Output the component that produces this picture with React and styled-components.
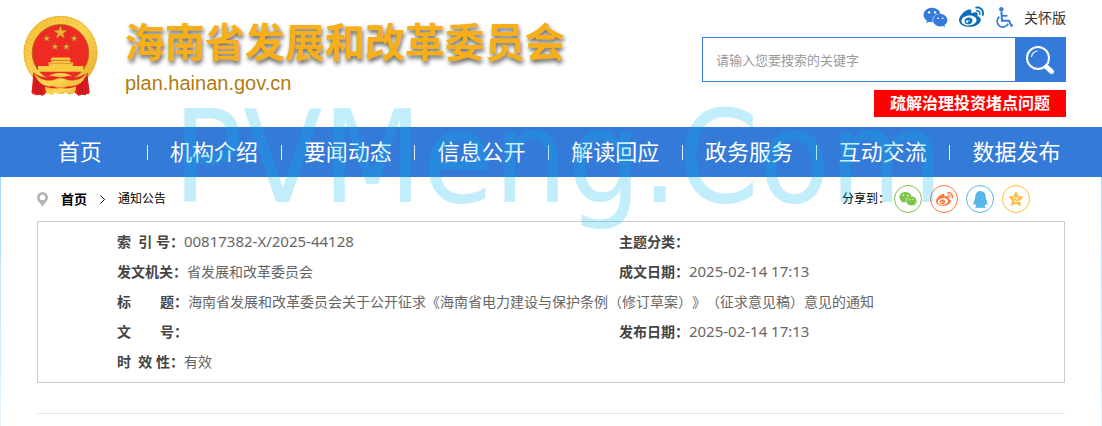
import React from 'react';
import styled, { createGlobalStyle } from 'styled-components';
import { FaWeixin, FaWeibo, FaQq } from 'react-icons/fa';

const navItems = ['首页', '机构介绍', '要闻动态', '信息公开', '解读回应', '政务服务', '互动交流', '数据发布'];

const details = [
  { label: '索  引 号：', value: '00817382-X/2025-44128', latin: true },
  { label: '主题分类：', value: '' },
  { label: '发文机关：', value: '省发展和改革委员会' },
  { label: '成文日期：', value: '2025-02-14 17:13', latin: true },
  { label: '标        题：', value: '海南省发展和改革委员会关于公开征求《海南省电力建设与保护条例（修订草案）》（征求意见稿）意见的通知', wide: true },
  { label: '文        号：', value: '' },
  { label: '发布日期：', value: '2025-02-14 17:13', latin: true },
  { label: '时  效 性：', value: '有效', wide: true },
];

const starPoints = (cx, cy, r) =>
  Array.from({ length: 10 }, (_, i) => {
    const radius = i % 2 ? r * 0.4 : r;
    const angle = (Math.PI / 5) * i - Math.PI / 2;
    return `${cx + radius * Math.cos(angle)},${cy + radius * Math.sin(angle)}`;
  }).join(' ');

const Emblem = () => (
  <svg width="75" height="82" viewBox="0 0 75 82" role="img" aria-label="国徽">
    <defs>
      <linearGradient id="gold" x1="0" y1="0" x2="1" y2="1">
        <stop offset="0" stopColor="#f2bd35" />
        <stop offset="0.5" stopColor="#fbd553" />
        <stop offset="1" stopColor="#e9ab28" />
      </linearGradient>
    </defs>
    <circle cx="37.5" cy="37.8" r="37" fill="url(#gold)" />
    <circle cx="37.5" cy="37.8" r="32.8" fill="none" stroke="#dfa126" strokeWidth="5" strokeDasharray="1 3" opacity="0.25" />
    <circle cx="37.5" cy="37.8" r="36.3" fill="none" stroke="#e8ae33" strokeWidth="1" strokeDasharray="3 1" />
    <circle cx="37.5" cy="37.8" r="28.3" fill="#ee2a22" stroke="#b5651d" strokeWidth="0.9" />
    <g fill="#eab03a" stroke="#96651c" strokeWidth="0.4">
      <polygon points={starPoints(37.4, 17.6, 7.4)} />
      <polygon points={starPoints(23.7, 23.5, 3.8)} />
      <polygon points={starPoints(51.2, 23.5, 3.8)} />
      <polygon points={starPoints(32, 31.8, 3.8)} />
      <polygon points={starPoints(43.4, 31.8, 3.8)} />
    </g>
    <g fill="#f8cb45">
      <path d="M29 42.4h17.4l1.8 2.6H27.2z" />
      <path d="M28.4 45.4h18.7v2.2H28.4z" />
      <path d="M25.2 47.2h25.1l-.8 4h-23.5z" />
      <path d="M15 51h45.4v5.8H15z" />
    </g>
    <path d="M28.6 45.3h18.3M26 48.6h23.5" stroke="#cf6c20" strokeWidth="0.5" />
    <path d="M11 57.5Q14 61 23 62.5h29Q60 61 64.3 57.5L66 79l-11 1.2-8.5-7H28.5l-8 7-11.2-1L10 58z" fill="#e8241f" />
    <path d="M11 58c5 7 15 9 21 6.4 3-1.7 7.8-1.7 11 0 6 2.6 16 .6 21-6.4v6c-5 5-13 7.8-19.5 7.2-3 2.2-10.5 2.2-14 0C22 71.8 14 68.5 11 64z" fill="url(#gold)" stroke="#d99a23" strokeWidth="0.4" />
    <path d="M26 61.5c3-4.8 20-4.8 23 0-5-1.5-8 .8-11.5.8S31 60 26 61.500z" fill="#f8cf4c" />
    <path d="M21.5 71.5q7 1.5 10.5 3.2 5.5-3.2 11 0 4-1.7 10.5-3.2l-2 6.5-5.5 1.7-3-2.5q-5 3.8-10.5 0l-3.5 2.8-5.5-1.8z" fill="url(#gold)" />
    <path d="M11 58c2 7 8 12 11.5 13.2L19.5 81l-3.5-1.7-3.2 1.2-1.2-2.5-3.2-.2z" fill="#dc1d1f" />
    <path d="M64.2 58c-2 7-8 12-11.5 13.2l2.8 9.8 3.5-1.7 3.2 1.2 1.5-2.5 3-.2z" fill="#dc1d1f" />
    <path d="M13 63l-.5 15M15 66l.5 13M18 69v10M62 63l.8 15M59.5 66v13M57 69v10" stroke="#b3141a" strokeWidth="0.7" />
  </svg>
);

const WheelchairIcon = () => (
  <svg width="18" height="22" viewBox="0 0 18 22" fill="none" stroke="currentColor" strokeWidth="1.7" aria-hidden="true">
    <circle cx="6.3" cy="2.3" r="2.2" fill="currentColor" stroke="none" />
    <path d="M6.400 4.500l.6 9.200h7l2.300 5 1.500-.5" strokeWidth="2" />
    <path d="M6.800 8.800h5.700" strokeWidth="1.8" />
    <path d="M4.400 9.700a5.800 5.800 0 1 0 8.800 7" />
  </svg>
);

const SearchIcon = () => (
  <svg width="30" height="30" viewBox="0 0 30 30" fill="none" stroke="#fff" aria-hidden="true">
    <circle cx="13" cy="13" r="11" strokeWidth="2" />
    <path d="M6.500 12a7 7 0 0 1 6-6" strokeWidth="1.2" />
    <path d="M21.500 22l5 4.500" strokeWidth="5" strokeLinecap="round" />
  </svg>
);

const PinIcon = () => (
  <svg width="11" height="15" viewBox="0 0 11 15" aria-hidden="true">
    <path fillRule="evenodd" fill="#b4b4b4" d="M5.500 0A5.500 5.500 0 0 0 0 5.500C0 8.500 3 11 5.500 14.500 8 11 11 8.500 11 5.500A5.500 5.500 0 0 0 5.500 0zm0 2.800a2.700 2.700 0 1 1 0 5.400 2.700 2.700 0 0 1 0-5.400z" />
  </svg>
);

const ChevronIcon = () => (
  <svg width="5" height="9" viewBox="0 0 5 9" fill="none" stroke="#000" aria-hidden="true">
    <path d="M.5.5l4 4-4 4" />
  </svg>
);

const QzoneIcon = () => (
  <svg width="16" height="16" viewBox="0 0 16 16" aria-hidden="true">
    <path fill="currentColor" stroke="currentColor" strokeLinejoin="round" d="M8 1l2.200 4.500 4.900.6-3.600 3.400.9 4.900L8 12.100l-4.400 2.300.9-4.900L.9 6.100l4.900-.6z" />
    <path fill="none" stroke="#fff" strokeWidth="0.9" d="M5 6.900q2.800-.5 5.400 0L6.200 10.300q3 .6 6.300-.2" />
  </svg>
);

const shares = [
  { name: '微信', color: '#7bc549', icon: <FaWeixin size={18} /> },
  { name: '微博', color: '#ff763b', icon: <FaWeibo size={17} /> },
  { name: 'QQ', color: '#56b6e7', icon: <FaQq size={17} /> },
  { name: 'QQ空间', color: '#fdbe3d', icon: <QzoneIcon /> },
];

export default function App() {
  return (
    <Page lang="zh-CN">
      <GlobalStyle />
      <Header>
        <Brand>
          <Emblem />
          <BrandText>
            <Title>海南省发展和改革委员会</Title>
            <Domain href="#">plan.hainan.gov.cn</Domain>
          </BrandText>
        </Brand>
        <Tools>
          <QuickLinks>
            <IconLink href="#" aria-label="微信"><FaWeixin size={25} /></IconLink>
            <IconLink href="#" aria-label="微博" $color="#0a6fb8"><FaWeibo size={25} /></IconLink>
            <IconLink href="#" aria-label="无障碍"><WheelchairIcon /></IconLink>
            <CareLink href="#">关怀版</CareLink>
          </QuickLinks>
          <Search onSubmit={(e) => e.preventDefault()}>
            <SearchInput type="text" aria-label="搜索" placeholder="请输入您要搜索的关键字" />
            <SearchButton type="submit" aria-label="搜索"><SearchIcon /></SearchButton>
          </Search>
          <Notice href="#">疏解治理投资堵点问题</Notice>
        </Tools>
      </Header>

      <Nav>
        {navItems.map((item) => (
          <NavItem key={item}>
            <NavLink href="#">{item}</NavLink>
          </NavItem>
        ))}
      </Nav>

      <Content>
        <Bar>
          <Crumbs aria-label="当前位置">
            <PinIcon />
            <Crumb href="#" $bold>首页</Crumb>
            <ChevronIcon />
            <Crumb href="#">通知公告</Crumb>
          </Crumbs>
          <Share>
            <ShareLabel>分享到：</ShareLabel>
            <ShareList>
              {shares.map(({ name, color, icon }) => (
                <ShareButton key={name} type="button" aria-label={name} $color={color}>{icon}</ShareButton>
              ))}
            </ShareList>
          </Share>
        </Bar>

        <Details>
          {details.map(({ label, value, wide, latin }) => (
            <Detail key={label} $wide={wide}>
              <Label>{label}</Label>
              <Value $latin={latin}>{value}</Value>
            </Detail>
          ))}
        </Details>
        <Divider />
      </Content>
      <Watermark aria-hidden="true">PVMeng.Com</Watermark>
    </Page>
  );
}

const GlobalStyle = createGlobalStyle`
  * {
    box-sizing: border-box;
  }

  body {
    margin: 0;
    background: #fff;
    font-family: "Noto Sans", "Noto Sans CJK SC", sans-serif;
    font-size: 14px;
    text-spacing-trim: space-all;
  }

  a {
    text-decoration: none;
  }
`;

const Page = styled.div`
  position: relative;
  display: flex;
  flex-direction: column;
  min-height: 100vh;
  overflow: hidden;
`;

const Header = styled.header`
  display: flex;
  justify-content: space-between;
  padding: 0 36px 10px 23px;
`;

const Brand = styled.div`
  display: flex;
  align-items: flex-start;
  gap: 27px;
  padding-top: 15px;
`;

const BrandText = styled.div`
  display: flex;
  flex-direction: column;
  gap: 7px;
  padding-top: 5px;
`;

const Title = styled.h1`
  margin: 0;
  font-size: 40px;
  line-height: 44px;
  font-weight: 700;
  white-space: nowrap;
  color: #f6ae19;
  text-shadow: 1px 3px 4px rgba(0, 0, 0, 0.6);
`;

const Domain = styled.a`
  font-family: "Liberation Sans", sans-serif;
  font-size: 20px;
  line-height: 24px;
  color: #b07c10;
`;

const Tools = styled.div`
  display: flex;
  flex-direction: column;
  align-items: flex-end;
  width: 364px;
`;

const QuickLinks = styled.div`
  display: flex;
  align-items: center;
  gap: 11px;
  height: 37px;
  padding-bottom: 2px;
`;

const IconLink = styled.a`
  display: flex;
  color: ${({ $color }) => $color || '#347ad9'};
`;

const CareLink = styled.a`
  font-size: 14px;
  line-height: 20px;
  color: #333;
`;

const Search = styled.form`
  display: flex;
  width: 100%;
  height: 45px;
  border: 1px solid #347ad9;
`;

const SearchInput = styled.input`
  flex: 1;
  min-width: 0;
  padding: 0 13px;
  border: none;
  outline: none;
  font-family: inherit;
  font-size: 13px;
  color: #333;

  &::placeholder {
    color: #999;
  }
`;

const SearchButton = styled.button`
  display: flex;
  align-items: center;
  justify-content: center;
  width: 50px;
  padding: 0;
  border: none;
  background: #347ad9;
  cursor: pointer;
`;

const Notice = styled.a`
  margin-top: 8px;
  padding: 0 16px;
  font-size: 16px;
  line-height: 27px;
  font-weight: 700;
  color: #fff;
  background: #f00;
`;

const Nav = styled.nav`
  display: grid;
  grid-template-columns: repeat(8, 1fr);
  padding: 0 19px 0 13px;
  background: #347ad9;
`;

const NavItem = styled.div`
  display: flex;
  align-items: center;
  height: 50px;

  &:not(:first-child)::before {
    content: '';
    width: 1px;
    height: 15px;
    background: #e6effb;
  }
`;

const NavLink = styled.a`
  flex: 1;
  padding-bottom: 2px;
  text-align: center;
  font-size: 22px;
  line-height: 48px;
  white-space: nowrap;
  color: #fff;
`;

const Content = styled.main`
  flex: 1;
  padding: 0 36px;
  border: solid transparent;
  border-width: 0 1px;
  border-image: linear-gradient(#a5d8ff, #e6f4ff) 1;
`;

const Bar = styled.div`
  display: flex;
  align-items: center;
  justify-content: space-between;
  height: 44px;
`;

const Crumbs = styled.nav`
  display: flex;
  align-items: center;
  gap: 13px;
`;

const Crumb = styled.a`
  font-size: ${({ $bold }) => ($bold ? '13px' : '12px')};
  line-height: 20px;
  font-weight: ${({ $bold }) => ($bold ? 700 : 400)};
  color: #000;
`;

const Share = styled.div`
  display: flex;
  align-items: center;
  gap: 4px;
  padding-right: 35px;
`;

const ShareList = styled.div`
  display: flex;
  gap: 8px;
`;

const ShareLabel = styled.span`
  font-size: 12px;
  line-height: 20px;
  color: #000;
`;

const ShareButton = styled.button`
  display: flex;
  align-items: center;
  justify-content: center;
  width: 28px;
  height: 28px;
  padding: 0;
  border: 1px solid ${({ $color }) => $color};
  border-radius: 50%;
  background: transparent;
  color: ${({ $color }) => $color};
  cursor: pointer;
`;

const Details = styled.dl`
  display: grid;
  grid-template-columns: 53% 47%;
  margin: 0;
  padding: 4px 0 6px 79px;
  border: 1px solid #ccc;
`;

const Detail = styled.div`
  display: flex;
  align-items: center;
  height: 30px;
  grid-column: ${({ $wide }) => ($wide ? '1 / -1' : 'auto')};
`;

const Label = styled.dt`
  font-weight: 700;
  white-space: pre;
  color: #444;
`;

const Value = styled.dd`
  margin: 0;
  font-size: ${({ $latin }) => ($latin ? '15px' : '14px')};
  white-space: nowrap;
  color: #666;
`;

const Divider = styled.hr`
  margin: 30px 0 0;
  border: none;
  border-top: 1px solid #e5e5e5;
`;

const Watermark = styled.div`
  position: absolute;
  top: 81px;
  left: 173px;
  font-family: "DejaVu Sans Condensed", "DejaVu Sans", sans-serif;
  font-size: 129px;
  line-height: 152px;
  color: rgba(0, 183, 239, 0.24);
  pointer-events: none;
`;
